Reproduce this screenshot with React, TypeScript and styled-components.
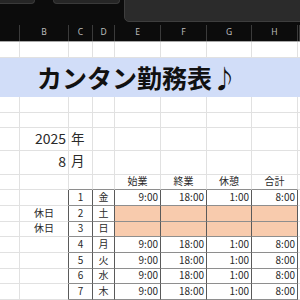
import React from 'react';
import styled, { createGlobalStyle } from 'styled-components';

const GlobalStyle = createGlobalStyle`
  html, body { margin: 0; padding: 0; background: #ffffff; }
  body {
    width: 300px;
    height: 300px;
    overflow: hidden;
    font-family: "Noto Sans CJK JP", "Noto Sans", sans-serif;
  }
`;

const COLS = '20px 49px 24px 22px 46px 46px 45px 46px 1fr';
const GRID = '#e1e1e1';
const DARK_V = '#5a5a5a';
const DARK_H = '#8e8e8e';

const Window = styled.div`
  width: 300px;
  height: 300px;
  overflow: hidden;
  display: flex;
  flex-direction: column;
`;

const TopBar = styled.div`
  height: 26px;
  background: #0c0c0c;
  display: flex;
  align-items: flex-start;
  overflow: hidden;
`;

const Tab = styled.div<{ $w: number; $ml: number }>`
  width: ${(p) => p.$w}px;
  margin-left: ${(p) => p.$ml}px;
  height: 4px;
  margin-top: -1px;
  background: #262626;
  border: 1px solid #3a3a3a;
  border-top: none;
  border-radius: 0 0 4px 4px;
`;

const Panel = styled.div`
  flex: 1;
  margin-left: 4px;
  margin-right: -10px;
  margin-top: -6px;
  height: 26px;
  background: #2b2b2b;
  border: 1px solid #3e3e3e;
  border-radius: 5px;
`;

const ColHeader = styled.div`
  display: grid;
  grid-template-columns: ${COLS};
  height: 16px;
  background: #0c0c0c;
  border-bottom: 1px solid #a8a8a8;
`;

const ColLabel = styled.div`
  border-right: 1px solid #3b3b3b;
  color: #bdbdbd;
  font-family: "Noto Sans", sans-serif;
  font-size: 8.5px;
  display: flex;
  align-items: center;
  justify-content: center;
  padding-bottom: 3px;
  box-sizing: border-box;
`;

const SheetRow = styled.div<{ $h: number }>`
  display: grid;
  grid-template-columns: ${COLS};
  height: ${(p) => p.$h}px;
`;

type Align = 'left' | 'center' | 'right';
type Edge = 'grid' | 'dark' | 'none';

const Cell = styled.div<{
  $align: Align;
  $fill?: string;
  $rb: Edge;
  $bb: Edge;
  $size: number;
  $pb: number;
}>`
  box-sizing: border-box;
  background: ${(p) => p.$fill || 'transparent'};
  border-right: 1px solid
    ${(p) => (p.$rb === 'dark' ? DARK_V : p.$rb === 'grid' ? GRID : 'transparent')};
  border-bottom: 1px solid
    ${(p) => (p.$bb === 'dark' ? DARK_H : p.$bb === 'grid' ? GRID : 'transparent')};
  display: flex;
  align-items: flex-end;
  justify-content: ${(p) =>
    p.$align === 'left' ? 'flex-start' : p.$align === 'right' ? 'flex-end' : 'center'};
  padding: 0 2px ${(p) => p.$pb}px 2px;
  font-size: ${(p) => p.$size}px;
  line-height: 1;
  color: #2a2a2a;
  white-space: nowrap;
  overflow: visible;
`;

const TitleRow = styled.div`
  height: 40px;
  background: #d1ddf8;
  display: flex;
  align-items: center;
  padding-left: 37px;
`;

const Title = styled.h1`
  margin: 0;
  font-family: "Noto Sans CJK JP", sans-serif;
  font-weight: 700;
  font-size: 25px;
  line-height: 1;
  color: #111111;
`;

type CellSpec = {
  text?: string;
  align?: Align;
  fill?: string;
  rb?: Edge;
  bb?: Edge;
  size?: number;
};

type RowSpec = { h: number; pb: number; cells: CellSpec[] };

const empty = (): CellSpec[] => Array.from({ length: 9 }, () => ({}));

const ORANGE = '#f8cbad';

const days = [
  { n: '1', d: '金', off: false },
  { n: '2', d: '土', off: true },
  { n: '3', d: '日', off: true },
  { n: '4', d: '月', off: false },
  { n: '5', d: '火', off: false },
  { n: '6', d: '水', off: false },
  { n: '7', d: '木', off: false },
];

const buildRows = (): { before: RowSpec[]; after: RowSpec[] } => {
  const before: RowSpec[] = [{ h: 16, pb: 3, cells: empty() }];

  const r3 = { h: 16, pb: 3, cells: empty() };
  const r4 = { h: 16, pb: 3, cells: empty() };

  const year = empty();
  year[1] = { text: '2025', align: 'right', size: 14 };
  year[2] = { text: '年', align: 'left', size: 13.5 };

  const month = empty();
  month[1] = { text: '8', align: 'right', size: 14 };
  month[2] = { text: '月', align: 'left', size: 13.5 };

  const heads = empty();
  heads[2] = { bb: 'dark' };
  heads[3] = { bb: 'dark' };
  heads[4] = { text: '始業', align: 'center', bb: 'dark' };
  heads[5] = { text: '終業', align: 'center', bb: 'dark' };
  heads[6] = { text: '休憩', align: 'center', bb: 'dark' };
  heads[7] = { text: '合計', align: 'center', bb: 'dark' };

  const after: RowSpec[] = [
    r3,
    r4,
    { h: 23, pb: 5, cells: year },
    { h: 24, pb: 6, cells: month },
    { h: 16, pb: 3, cells: heads },
  ];

  days.forEach((day) => {
    const c = empty();
    c[1] = { text: day.off ? '休日' : '', align: 'center', rb: 'dark' };
    c[2] = { text: day.n, align: 'center', rb: 'dark', bb: 'dark' };
    c[3] = { text: day.d, align: 'center', rb: 'dark', bb: 'dark' };
    const times = ['9:00', '18:00', '1:00', '8:00'];
    times.forEach((t, i) => {
      c[4 + i] = day.off
        ? { fill: ORANGE, rb: 'dark', bb: 'dark' }
        : { text: t, align: 'right', rb: 'dark', bb: 'dark' };
    });
    after.push({ h: 16, pb: 3, cells: c });
  });

  return { before, after };
};

const renderRow = (row: RowSpec, key: number) => (
  <SheetRow $h={row.h} key={key}>
    {row.cells.map((c, i) => (
      <Cell
        key={i}
        $align={c.align || 'left'}
        $fill={c.fill}
        $rb={c.rb || 'grid'}
        $bb={c.bb || 'grid'}
        $size={c.size || 10}
        $pb={row.pb}
      >
        {c.text}
      </Cell>
    ))}
  </SheetRow>
);

const LETTERS = ['', 'B', 'C', 'D', 'E', 'F', 'G', 'H', ''];

export default function App() {
  const { before, after } = buildRows();
  return (
    <Window>
      <GlobalStyle />
      <TopBar>
        <Tab $w={37} $ml={-4} />
        <Tab $w={65} $ml={18} />
        <Panel />
      </TopBar>
      <ColHeader>
        {LETTERS.map((l, i) => (
          <ColLabel key={i}>{l}</ColLabel>
        ))}
      </ColHeader>
      {before.map((r, i) => renderRow(r, i))}
      <TitleRow>
        <Title>カンタン勤務表♪</Title>
      </TitleRow>
      {after.map((r, i) => renderRow(r, 100 + i))}
    </Window>
  );
}
